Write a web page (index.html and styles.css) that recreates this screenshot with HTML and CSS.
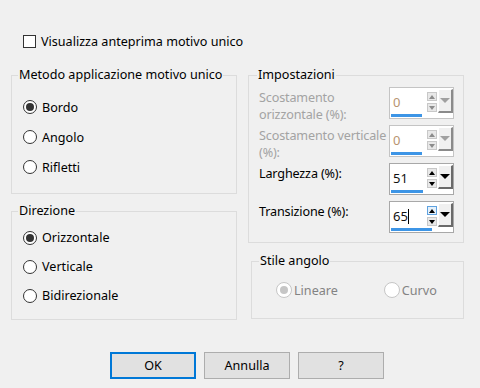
FILE: index.html
```html
<!DOCTYPE html>
<html>
<head>
    <title>Motivo unico</title>
    <meta charset="UTF-8">
    <link rel="stylesheet" href="styles.css">
</head>
<body>
    <div class="dialog">
        <label class="check-row"><span class="checkbox"></span>Visualizza anteprima motivo unico</label>

        <div class="columns">
            <div class="col col-left">
                <fieldset class="group group-metodo">
                    <legend>Metodo applicazione motivo unico</legend>
                    <div class="radio-row"><span class="radio checked"></span>Bordo</div>
                    <div class="radio-row"><span class="radio"></span>Angolo</div>
                    <div class="radio-row"><span class="radio"></span>Rifletti</div>
                </fieldset>

                <fieldset class="group group-direzione">
                    <legend>Direzione</legend>
                    <div class="radio-row"><span class="radio checked"></span>Orizzontale</div>
                    <div class="radio-row"><span class="radio"></span>Verticale</div>
                    <div class="radio-row"><span class="radio"></span>Bidirezionale</div>
                </fieldset>
            </div>

            <div class="col col-right">
                <fieldset class="group group-impostazioni">
                    <legend>Impostazioni</legend>

                    <div class="field disabled">
                        <div class="field-label">Scostamento<br>orizzontale (%):</div>
                        <div class="spin">
                            <div class="spin-main">
                                <div class="spin-value">0</div>
                                <div class="spin-arrows">
                                    <span class="spin-btn up"></span>
                                    <span class="spin-btn down"></span>
                                </div>
                                <div class="spin-drop"></div>
                            </div>
                            <div class="spin-bar" style="width: 31px"></div>
                        </div>
                    </div>

                    <div class="field disabled">
                        <div class="field-label">Scostamento verticale<br>(%):</div>
                        <div class="spin">
                            <div class="spin-main">
                                <div class="spin-value">0</div>
                                <div class="spin-arrows">
                                    <span class="spin-btn up"></span>
                                    <span class="spin-btn down"></span>
                                </div>
                                <div class="spin-drop"></div>
                            </div>
                            <div class="spin-bar" style="width: 31px"></div>
                        </div>
                    </div>

                    <div class="field">
                        <div class="field-label">Larghezza (%):</div>
                        <div class="spin">
                            <div class="spin-main">
                                <div class="spin-value">51</div>
                                <div class="spin-arrows">
                                    <span class="spin-btn up"></span>
                                    <span class="spin-btn down"></span>
                                </div>
                                <div class="spin-drop"></div>
                            </div>
                            <div class="spin-bar" style="width: 32px"></div>
                        </div>
                    </div>

                    <div class="field">
                        <div class="field-label">Transizione (%):</div>
                        <div class="spin">
                            <div class="spin-main">
                                <div class="spin-value">65<span class="caret"></span></div>
                                <div class="spin-arrows">
                                    <span class="spin-btn up hot"></span>
                                    <span class="spin-btn down"></span>
                                </div>
                                <div class="spin-drop"></div>
                            </div>
                            <div class="spin-bar" style="width: 41px"></div>
                        </div>
                    </div>
                </fieldset>

                <fieldset class="group group-stile disabled">
                    <legend>Stile angolo</legend>
                    <div class="inline-radios">
                        <div class="radio-row"><span class="radio checked"></span>Lineare</div>
                        <div class="radio-row"><span class="radio"></span>Curvo</div>
                    </div>
                </fieldset>
            </div>
        </div>

        <div class="buttons">
            <button class="default">OK</button>
            <button>Annulla</button>
            <button>?</button>
        </div>
    </div>
</body>
</html>
```

FILE: styles.css
```css
body {
    margin: 0;
    background-color: #f0f0f0;
    font-family: "Noto Sans", "Open Sans", sans-serif;
    font-size: 12.6px;
    color: #000;
}
.dialog {
    width: 480px;
    height: 388px;
}
.check-row {
    display: flex;
    align-items: center;
    gap: 5px;
    height: 17px;
    padding: 33px 0 0 23px;
    line-height: 17px;
}
.checkbox {
    width: 13px;
    height: 13px;
    box-sizing: border-box;
    border: 1px solid #333;
    background-color: #fff;
}
.columns {
    display: flex;
    gap: 11px;
    margin-top: 17px;
    padding-left: 11px;
}
.col {
    display: flex;
    flex-direction: column;
}
.col-left {
    width: 226px;
}
.col-right {
    width: 216px;
}
.group {
    margin: 0;
    min-width: 0;
    border: 1px solid #dcdcdc;
    padding: 0 0 0 11px;
}
.group legend {
    padding: 0 1px;
    margin-left: -5px;
    line-height: 16px;
}
.group-metodo {
    padding-top: 9px;
    padding-bottom: 11px;
}
.group-metodo .radio-row {
    height: 30px;
}
.group-direzione {
    margin-top: 9px;
    padding-top: 4px;
    padding-bottom: 9px;
}
.group-direzione .radio-row {
    height: 29px;
}
.radio-row {
    display: flex;
    align-items: center;
    gap: 5px;
}
.radio {
    width: 14px;
    height: 14px;
    box-sizing: border-box;
    border: 1px solid #333;
    border-radius: 50%;
    background-color: #fff;
    display: flex;
    align-items: center;
    justify-content: center;
}
.radio.checked::after {
    content: "";
    width: 8px;
    height: 8px;
    border-radius: 50%;
    background-color: #333;
}

/* Impostazioni */
.group-impostazioni {
    padding: 4px 9px 9px 10px;
    display: flex;
    flex-direction: column;
    gap: 6px;
}
.group-impostazioni legend {
    margin-left: -2px;
}
.field {
    display: flex;
    justify-content: space-between;
    align-items: flex-start;
    height: 32px;
}
.field-label {
    padding-top: 2px;
    line-height: 17px;
    white-space: nowrap;
    letter-spacing: -0.15px;
}
.field.disabled .field-label {
    color: #a3a3a3;
}
.spin {
    flex-shrink: 0;
    width: 65px;
    height: 32px;
    box-sizing: border-box;
    border: 1px solid #a8a8a8;
    background-color: #fff;
    display: flex;
    flex-direction: column;
}
.field.disabled .spin {
    border-color: #c4c4c4;
}
.spin-main {
    display: flex;
    height: 25px;
}
.spin-value {
    flex: 1;
    padding: 6px 0 0 3px;
    font-size: 13px;
    line-height: 17px;
    color: #111;
}
.field.disabled .spin-value {
    color: #b89470;
}
.caret {
    display: inline-block;
    width: 1px;
    height: 15px;
    background-color: #000;
    vertical-align: -3px;
}
.spin-arrows {
    width: 10px;
    padding: 4px 1px 0 2px;
    display: flex;
    flex-direction: column;
    gap: 2px;
}
.spin-btn {
    height: 9px;
    box-sizing: border-box;
    border: 1px solid #c8c8c8;
    background-color: #e8e8e8;
    display: flex;
    align-items: center;
    justify-content: center;
}
.spin-btn::after {
    content: "";
    border-left: 3px solid transparent;
    border-right: 3px solid transparent;
}
.spin-btn.up::after {
    border-bottom: 4px solid #000;
}
.spin-btn.down::after {
    border-top: 4px solid #000;
}
.field.disabled .spin-btn.up::after {
    border-bottom-color: #8c8c8c;
}
.field.disabled .spin-btn.down::after {
    border-top-color: #8c8c8c;
}
.spin-btn.hot {
    border-color: #5fa2e0;
    background-color: #e5f1fb;
}
.spin-drop {
    width: 15px;
    height: 24px;
    margin-top: 1px;
    box-sizing: border-box;
    border-top: 1px solid #fff;
    border-left: 1px solid #fff;
    border-right: 2px solid #6a6a6a;
    border-bottom: 2px solid #6a6a6a;
    background-color: #f0f0f0;
    display: flex;
    justify-content: center;
    padding-top: 8px;
}
.spin-drop::after {
    content: "";
    height: 0;
    border-left: 5px solid transparent;
    border-right: 5px solid transparent;
    border-top: 5px solid #000;
}
.field.disabled .spin-drop::after {
    border-top-color: #a0a0a0;
}
.field.disabled .spin-drop {
    border-right-color: #8a8a8a;
    border-bottom-color: #8a8a8a;
}
.spin-bar {
    height: 3px;
    margin: 1px 0 0 1px;
    background-color: #3d95e6;
}

/* Stile angolo */
.group-stile {
    margin: 10px 0 0 3px;
    padding: 11px 0 18px 24px;
}
.group-stile legend {
    margin-left: -17px;
}
.inline-radios {
    display: flex;
    height: 20px;
    gap: 46px;
}
.group-stile .radio-row {
    color: #838383;
    gap: 2px;
}
.group-stile .radio {
    width: 16px;
    height: 16px;
    border-color: #c6c6c6;
}
.group-stile .radio.checked::after {
    background-color: #c6c6c6;
}

.buttons {
    display: flex;
    gap: 8px;
    margin-top: 32px;
    padding-left: 110px;
}
button {
    width: 86px;
    height: 27px;
    box-sizing: border-box;
    border: 1px solid #adadad;
    background-color: #e1e1e1;
    font-family: inherit;
    font-size: 12.6px;
    color: #000;
    padding: 0;
}
button.default {
    border: 2px solid #0078d7;
}
```
